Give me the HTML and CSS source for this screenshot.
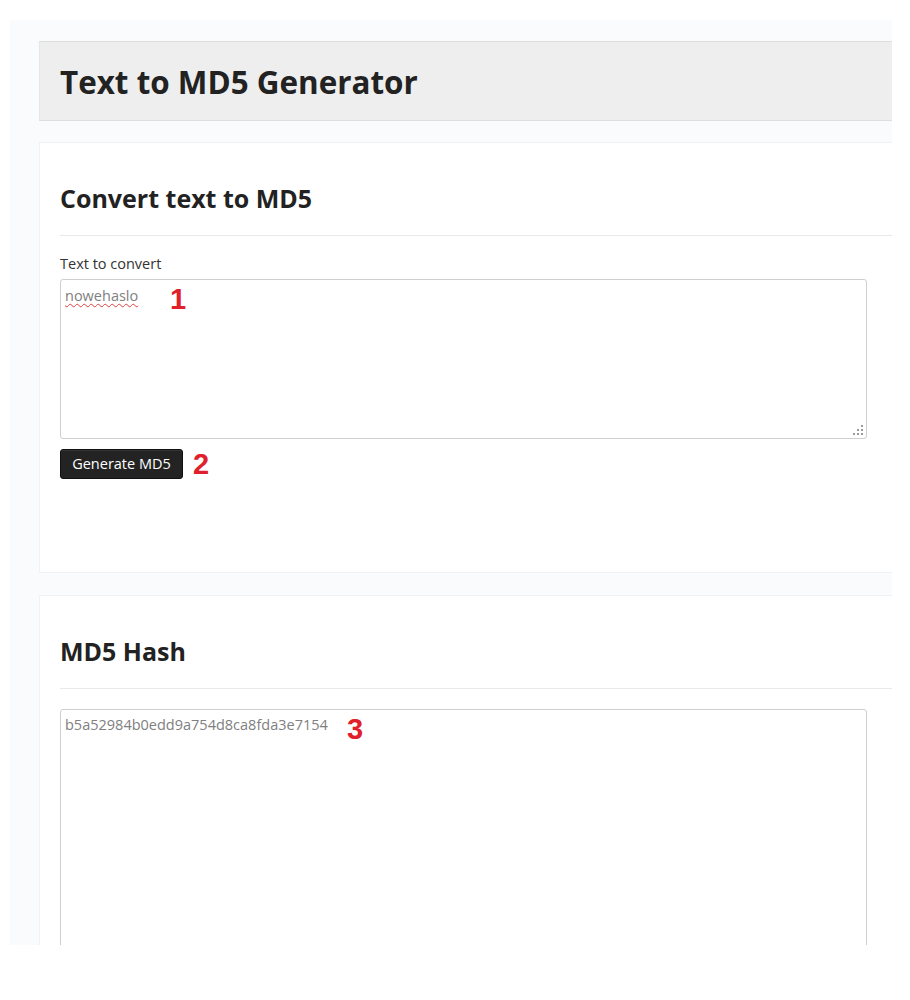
FILE: index.html
```html
<!DOCTYPE html>
<html lang="en">
<head>
<meta charset="utf-8">
<title>Text to MD5 Generator</title>
<link rel="stylesheet" href="styles.css">
</head>
<body>
<div class="frame">
  <div class="page">
    <header class="page-head">
      <h1 class="title">Text to MD5 Generator</h1>
    </header>

    <section class="card card-convert">
      <div class="card-head">
        <h2 class="card-title">Convert text to MD5</h2>
      </div>
      <label class="label">Text to convert</label>
      <div class="field field-input" role="textbox">
        <span class="typo">nowehaslo</span>
        <span class="mark mark-1">1</span>
        <svg class="grip" width="10" height="10" viewBox="0 0 10 10">
          <rect x="8" y="0" width="2" height="2" fill="#9a9a9a"/>
          <rect x="4" y="4" width="2" height="2" fill="#9a9a9a"/>
          <rect x="8" y="4" width="2" height="2" fill="#9a9a9a"/>
          <rect x="0" y="8" width="2" height="2" fill="#9a9a9a"/>
          <rect x="4" y="8" width="2" height="2" fill="#9a9a9a"/>
          <rect x="8" y="8" width="2" height="2" fill="#9a9a9a"/>
        </svg>
      </div>
      <div class="actions">
        <button class="btn" type="button">Generate MD5</button>
        <span class="mark-inline">2</span>
      </div>
    </section>

    <section class="card card-hash">
      <div class="card-head">
        <h2 class="card-title">MD5 Hash</h2>
      </div>
      <div class="field field-output" role="textbox">
        <span>b5a52984b0edd9a754d8ca8fda3e7154</span>
        <span class="mark mark-3">3</span>
      </div>
    </section>
  </div>
</div>
</body>
</html>
```

FILE: styles.css
```css
html, body {
  margin: 0;
  padding: 0;
  background: #ffffff;
}

body {
  font-family: "Open Sans", "Noto Sans", sans-serif;
  color: #222;
}

.frame {
  margin: 20px 0 0 10px;
  width: 882px;
  height: 925px;
  overflow: hidden;
  background: #fafbfd;
  box-sizing: border-box;
  padding: 21px 0 0 29px;
}

.page {
  width: 900px;
}

.page-head {
  height: 78px;
  background: #eeeeee;
  border-top: 1px solid #dedede;
  border-bottom: 1px solid #dedede;
  border-left: 1px solid #e6e6e6;
  display: flex;
  align-items: center;
  padding-left: 20px;
}

.title {
  margin: 0;
  font-size: 31.4px;
  font-weight: 700;
  line-height: 36px;
  color: #222;
  padding-top: 2px;
}

.card {
  background: #ffffff;
  border: 1px solid #f0f1f3;
  padding: 40px 0 0 20px;
}

.card-convert {
  margin-top: 21px;
  height: 389px;
}

.card-hash {
  margin-top: 22px;
  height: 400px;
}

.card-head {
  border-bottom: 1px solid #e9e9ea;
  padding-bottom: 22px;
}

.card-title {
  margin: 0;
  font-size: 25px;
  line-height: 30px;
  font-weight: 700;
  color: #222;
}

.label {
  display: block;
  margin-top: 18px;
  font-size: 14.5px;
  line-height: 20px;
  color: #333;
}

.field {
  position: relative;
  box-sizing: border-box;
  width: 807px;
  border: 1px solid #cfcfcf;
  border-radius: 3px;
  background: #fff;
  padding: 6px 4px;
  font-size: 14.5px;
  line-height: 20px;
  color: #808080;
}

.field-input {
  margin-top: 5px;
  height: 160px;
}

.field-output {
  margin-top: 20px;
  height: 400px;
  padding-top: 5px;
}

.typo {
  text-decoration: underline wavy #e04040;
  text-decoration-thickness: 1px;
  text-underline-offset: 2px;
}

.mark,
.mark-inline {
  font-family: "Liberation Sans", Arial, sans-serif;
  font-weight: 700;
  font-size: 29px;
  line-height: 1;
  color: #e0202a;
}

.mark {
  position: absolute;
  top: 5px;
}

.mark-1 { left: 109px; }
.mark-3 { left: 286px; }

.grip {
  position: absolute;
  right: 3px;
  bottom: 3px;
}

.actions {
  display: flex;
  align-items: center;
  gap: 10px;
  margin-top: 9px;
}

.btn {
  height: 30px;
  width: 123px;
  box-sizing: border-box;
  background: #232323;
  border: 1px solid #111;
  border-radius: 3px;
  color: #fff;
  font-family: "Open Sans", "Noto Sans", sans-serif;
  font-size: 14.5px;
  padding: 0 6px;
  box-shadow: inset 0 1px 0 rgba(255,255,255,0.08);
}

.mark-inline {
  margin-top: 2px;
}
```
